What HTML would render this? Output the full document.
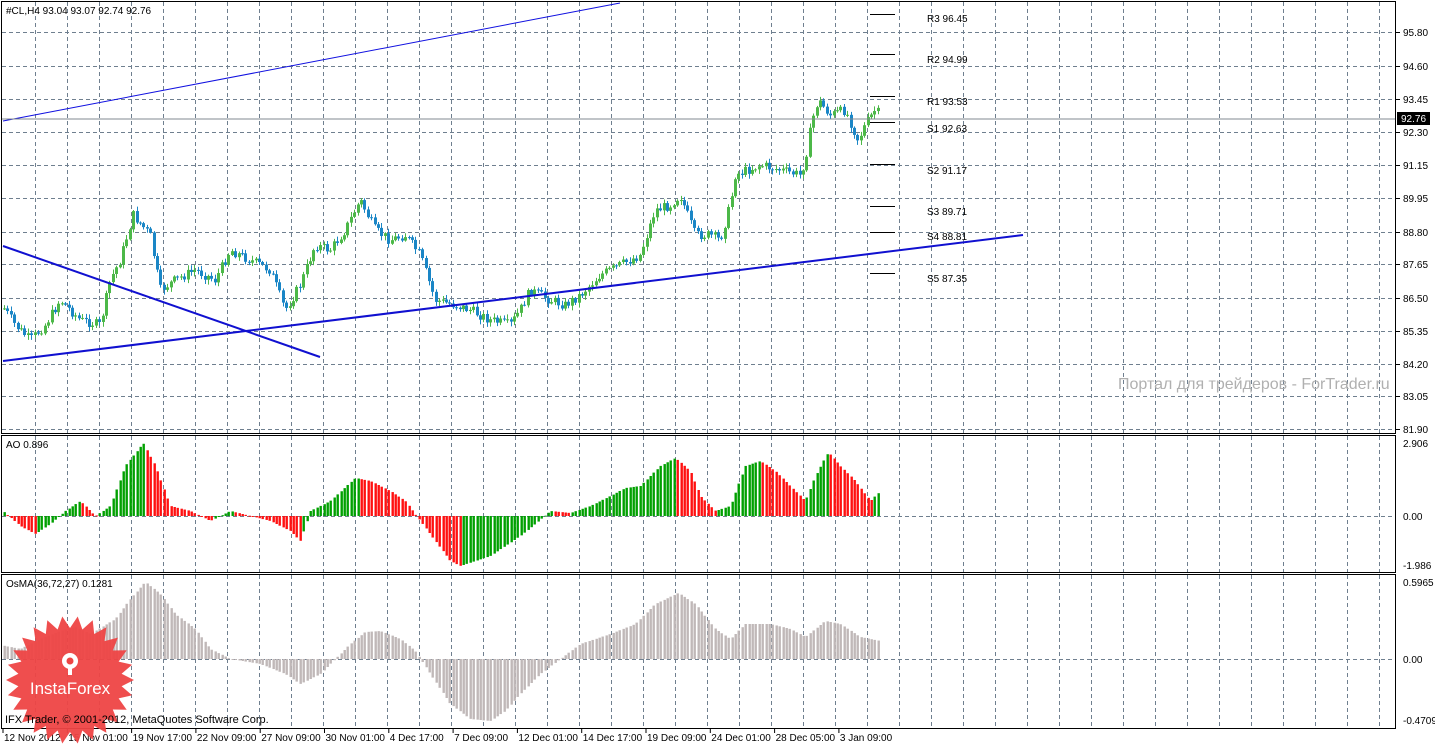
<!DOCTYPE html>
<html><head><meta charset="utf-8"><style>
html,body{margin:0;padding:0;background:#fff;width:1435px;height:745px;overflow:hidden}
svg{display:block;font-family:"Liberation Sans","DejaVu Sans",sans-serif}
</style></head><body>
<svg id="s" width="1435" height="745" xmlns="http://www.w3.org/2000/svg">
<rect width="1435" height="745" fill="#fff"/>
<g id="grid" stroke="#6f7f8f" stroke-width="1" stroke-dasharray="4,3" fill="none"></g>
<g id="bars"></g>
<line x1="3" y1="121" x2="620" y2="3" stroke="#1010e0" stroke-width="1"/>
<line x1="3" y1="361" x2="1023" y2="235" stroke="#1010d0" stroke-width="2"/>
<line x1="3" y1="246" x2="320" y2="357" stroke="#1010d0" stroke-width="2"/>
<line x1="2" y1="119" x2="1396" y2="119" stroke="#808890" stroke-width="1"/>
<g stroke="#000" stroke-width="1">
<line x1="870" y1="14.5" x2="895" y2="14.5"/><line x1="870" y1="54.5" x2="895" y2="54.5"/>
<line x1="870" y1="96.5" x2="895" y2="96.5"/><line x1="870" y1="122.5" x2="895" y2="122.5"/>
<line x1="870" y1="164.5" x2="895" y2="164.5"/><line x1="870" y1="206.5" x2="895" y2="206.5"/>
<line x1="870" y1="232.5" x2="895" y2="232.5"/><line x1="870" y1="273.5" x2="895" y2="273.5"/>
</g>
<g font-size="10" fill="#000">
<text x="927" y="22">R3 96.45</text><text x="927" y="63">R2 94.99</text>
<text x="927" y="105">R1 93.53</text><text x="927" y="132">S1 92.63</text>
<text x="927" y="174">S2 91.17</text><text x="927" y="215">S3 89.71</text>
<text x="927" y="240">S4 88.81</text><text x="927" y="282">S5 87.35</text>
<text x="6" y="14">#CL,H4  93.04 93.07 92.74 92.76</text>
<text x="6" y="448">AO 0.896</text>
<text x="6" y="587">OsMA(36,72,27) 0.1281</text>
</g>
<text x="1118" y="389" font-size="16" fill="#b0b0b0">Портал для трейдеров - ForTrader.ru</text>
<g stroke="#000" fill="none" stroke-width="1">
<rect x="1.5" y="1.5" width="1394" height="432"/>
<rect x="1.5" y="435.5" width="1394" height="137"/>
<rect x="1.5" y="574.5" width="1394" height="154"/>
</g>
<g id="axis" font-size="10" fill="#000"></g>
<rect x="1397" y="112" width="33" height="13" fill="#000"/>
<text x="1401" y="122" font-size="10" fill="#fff">92.76</text>
<polygon id="star" fill="#ee4444" opacity="0.95"/>
<g fill="#fff">
<circle cx="70" cy="661" r="8"/><circle cx="70" cy="661" r="3.5" fill="#ee4444"/>
<rect x="68" y="665" width="4" height="10"/>
</g>
<text x="70" y="694" font-size="17" fill="#fff" text-anchor="middle">InstaForex</text>
<text x="5" y="723" font-size="11" fill="#000">IFX Trader, © 2001-2012, MetaQuotes Software Corp.</text>
</svg>
<script>
(function(){
var NS='http://www.w3.org/2000/svg';
function el(p,t,a,tx){var e=document.createElementNS(NS,t);for(var k in a)e.setAttribute(k,a[k]);if(tx!=null)e.textContent=tx;p.appendChild(e);return e;}
var G=document.getElementById('grid'),B=document.getElementById('bars'),A=document.getElementById('axis');
for(var x=35.5;x<1395;x+=32){el(G,'line',{x1:x,y1:2,x2:x,y2:433});el(G,'line',{x1:x,y1:436,x2:x,y2:572});el(G,'line',{x1:x,y1:575,x2:x,y2:728});}
var py=[[32,'95.80'],[66,'94.60'],[99,'93.45'],[132,'92.30'],[165,'91.15'],[198,'89.95'],[232,'88.80'],[264,'87.65'],[298,'86.50'],[331,'85.35'],[364,'84.20'],[396,'83.05'],[429,'81.90']];
py.forEach(function(p){el(G,'line',{x1:2,y1:p[0]+.5,x2:1395,y2:p[0]+.5});el(A,'text',{x:1403,y:p[0]+4},p[1]);el(A,'line',{x1:1396,y1:p[0]+.5,x2:1400,y2:p[0]+.5,stroke:'#000'});});
[[443,'2.906'],[516,'0.00'],[565,'-1.986'],[582,'0.5965'],[659,'0.00'],[720,'-0.4709']].forEach(function(p){el(A,'text',{x:1403,y:p[0]+4},p[1]);});
el(G,'line',{x1:2,y1:516.5,x2:1395,y2:516.5});el(G,'line',{x1:2,y1:659.5,x2:1395,y2:659.5});
var tl=['12 Nov 2012','15 Nov 01:00','19 Nov 17:00','22 Nov 09:00','27 Nov 09:00','30 Nov 01:00','4 Dec 17:00','7 Dec 09:00','12 Dec 01:00','14 Dec 17:00','19 Dec 09:00','24 Dec 01:00','28 Dec 05:00','3 Jan 09:00'];
tl.forEach(function(t,i){var x=4+i*64.3;el(A,'text',{x:x,y:741},t);el(A,'line',{x1:x-1,y1:729,x2:x-1,y2:733,stroke:'#000'});});
function interp(k,x){for(var i=1;i<k.length;i++){if(x<=k[i][0]){var a=k[i-1],b=k[i],t=(x-a[0])/(b[0]-a[0]);return a[1]+(b[1]-a[1])*t;}}return k[k.length-1][1];}
var P=[[5,310],[15,325],[30,340],[45,325],[60,300],[80,320],[100,325],[110,280],[120,260],[133,215],[150,235],[160,290],[175,280],[195,270],[215,280],[230,250],[250,260],[270,270],[285,310],[300,285],[315,245],[330,250],[345,230],[360,200],[375,230],[390,240],[405,235],[420,255],[435,300],[455,305],[470,310],[490,320],[510,325],[520,310],[530,290],[550,300],[565,305],[580,295],[600,275],[620,265],[640,255],[655,210],[670,205],[680,195],[695,235],[710,235],[720,240],[730,205],[735,175],[760,165],[780,170],[800,175],[805,160],[812,120],[818,100],[830,115],[845,110],[858,140],[865,125],[875,110],[880,115]];
var AO=[[5,3],[20,-10],[35,-18],[50,-8],[65,5],[80,15],[95,0],[110,10],[125,50],[143,73],[155,50],[170,10],[190,5],[210,-5],[230,5],[250,0],[270,-5],[290,-15],[300,-25],[310,5],[330,15],[355,38],[370,35],[390,25],[405,15],[420,-5],[435,-25],[450,-45],[460,-50],[475,-45],[490,-40],[505,-30],[520,-20],[535,-8],[550,5],[570,3],[590,10],[610,20],[625,28],[640,30],[660,50],[675,58],[690,45],[700,20],[715,5],[730,10],[745,50],[760,55],[775,45],[790,30],[805,15],[815,40],[828,64],[840,50],[855,35],[870,15],[880,25]];
var OS=[[5,13],[20,10],[40,20],[60,28],[75,32],[90,25],[115,40],[130,60],[145,77],[160,65],[175,45],[195,30],[210,10],[230,0],[260,-5],[285,-15],[300,-25],[320,-15],[335,0],[350,15],[365,27],[380,28],[400,20],[415,8],[430,-15],[450,-45],[470,-60],[490,-62],[505,-52],[520,-35],[540,-15],[560,0],[580,15],[610,25],[635,35],[655,55],[678,66],[695,55],[715,30],[730,20],[745,35],[770,35],[790,30],[805,22],[825,38],[840,35],[860,22],[880,18]];
var seed=7;function rnd(){seed=(seed*9301+49297)%233280;return seed/233280;}
var prev=interp(P,4),pa=null;
for(var x=4;x<=881;x+=3.4){
 var c=interp(P,x)+(rnd()-.5)*10,o=prev;prev=c;
 var up=c<o,tp=Math.min(o,c),bt=Math.max(o,c);
 var h=tp-1-rnd()*4,l=bt+1+rnd()*4,cx=Math.round(x)+.5;
 var col=up?'#4cb848':'#1a86c6';
 el(B,'line',{x1:cx,y1:h,x2:cx,y2:l,stroke:col,'stroke-width':1});
 el(B,'rect',{x:cx-1.5,y:tp,width:3,height:Math.max(1,bt-tp),fill:col});
 var a=interp(AO,x);var ac=(pa===null||a>=pa)?'#00a000':'#ff1010';pa=a;
 el(B,'rect',{x:cx-1,y:a>0?516-a:516,width:2.4,height:Math.max(1,Math.abs(a)),fill:ac});
 var s=interp(OS,x);
 el(B,'rect',{x:cx-1,y:s>0?659-s:659,width:2.4,height:Math.max(1,Math.abs(s)),fill:'#c0b8b8'});
}
var pts=[],n=26;for(var i=0;i<n*2;i++){var r=i%2?52:64,an=i*Math.PI/n;pts.push((70+r*Math.cos(an)).toFixed(1)+','+(680+r*Math.sin(an)).toFixed(1));}
document.getElementById('star').setAttribute('points',pts.join(' '));
})();
</script>
</body></html>
